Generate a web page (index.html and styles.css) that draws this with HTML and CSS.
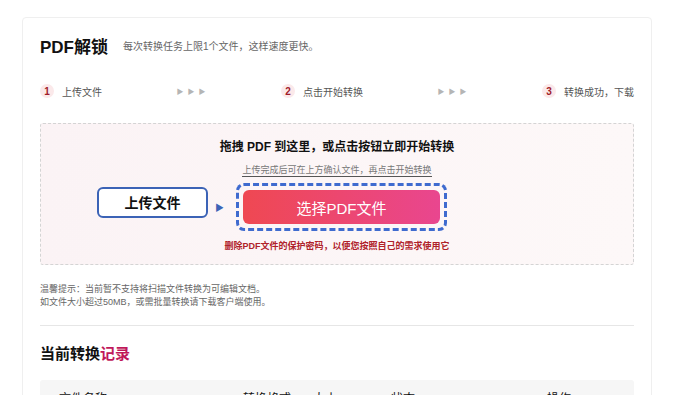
FILE: index.html
```html
<!DOCTYPE html>
<html lang="zh-CN">
  <head>
    <meta charset="UTF-8">
    <title>PDF解锁</title>
    <link rel="stylesheet" href="styles.css">
  </head>
  <body>
    <div class="page">
      <div class="card">
        <!-- 标题 -->
        <div class="header">
          <span class="title">PDF解锁</span>
          <span class="subtitle">每次转换任务上限1个文件，这样速度更快。</span>
        </div>

        <!-- 步骤 -->
        <div class="steps">
          <div class="step"><span class="step-num">1</span>上传文件</div>
          <div class="step-arrows">▶ ▶ ▶</div>
          <div class="step"><span class="step-num">2</span>点击开始转换</div>
          <div class="step-arrows">▶ ▶ ▶</div>
          <div class="step"><span class="step-num">3</span>转换成功，下载</div>
        </div>

        <!-- 上传区域 -->
        <div class="dropzone">
          <div class="drop-title">拖拽 PDF 到这里，或点击按钮立即开始转换</div>
          <div class="drop-hint">上传完成后可在上方确认文件，再点击开始转换</div>
          <div class="drop-row">
            <div class="drop-left">
              <div class="upload-label">上传文件</div>
              <span class="upload-arrow">▶</span>
            </div>
            <div class="dash-box">
              <button class="select-button">选择PDF文件</button>
            </div>
            <div></div>
          </div>
          <div class="drop-note">删除PDF文件的保护密码，以便您按照自己的需求使用它</div>
        </div>

        <div class="tips">
          温馨提示：当前暂不支持将扫描文件转换为可编辑文档。<br>
          如文件大小超过50MB，或需批量转换请下载客户端使用。
        </div>

        <div class="divider"></div>

        <div class="record-title">当前转换<span class="accent">记录</span></div>

        <div class="table-head">
          <span class="col col-name">文件名称</span>
          <span class="col col-format">转换格式</span>
          <span class="col col-size">大小</span>
          <span class="col col-status">状态</span>
          <span class="col col-op">操作</span>
        </div>
        <div class="table-body"></div>
      </div>
    </div>
  </body>
</html>
```

FILE: styles.css
```css
body {
  margin: 0;
  background: #fff;
  font-family: "Liberation Sans", "Noto Sans CJK SC", sans-serif;
  color: #222;
}

.page {
  padding: 17px 0 0 22px;
}

.card {
  width: 594px;
  padding: 15px 17px 40px;
  border: 1px solid #efefef;
  border-radius: 4px;
  background: #fff;
}

/* 标题 */
.header {
  display: flex;
  align-items: center;
  height: 24px;
}

.title {
  font-size: 17px;
  font-weight: bold;
  color: #111;
  margin-right: 15px;
}

.subtitle {
  font-size: 10px;
  color: #666;
}

/* 步骤 */
.steps {
  display: flex;
  justify-content: space-between;
  align-items: center;
  height: 20px;
  margin-top: 24px;
}

.step {
  display: flex;
  align-items: center;
  font-size: 10px;
  color: #555;
}

.step-num {
  width: 14px;
  height: 14px;
  border-radius: 50%;
  background: #fbe9ea;
  color: #a01c2a;
  font-size: 10px;
  font-weight: bold;
  display: flex;
  align-items: center;
  justify-content: center;
  margin-right: 8px;
}

.step-arrows {
  font-size: 7px;
  color: #b5b5b5;
  letter-spacing: 1px;
}

/* 上传区域 */
.dropzone {
  margin-top: 22px;
  height: 140px;
  border: 1px dashed #d4d4d4;
  border-radius: 3px;
  background: linear-gradient(90deg, #fbf3f5, #fdf8f8);
  display: flex;
  flex-direction: column;
  align-items: center;
}

.drop-title {
  margin-top: 15px;
  font-size: 12px;
  font-weight: bold;
  color: #111;
  line-height: 16px;
}

.drop-hint {
  margin-top: 10px;
  font-size: 9px;
  color: #777;
  line-height: 11px;
  border-bottom: 1px solid #555;
}

.drop-row {
  width: 100%;
  display: grid;
  grid-template-columns: 1fr auto 1fr;
  align-items: center;
  margin-top: 6px;
  padding-left: 9px;
  box-sizing: border-box;
}

.drop-left {
  display: flex;
  align-items: center;
  justify-content: flex-end;
  padding-right: 12px;
}

.upload-label {
  width: 107px;
  height: 27px;
  border: 2px solid #3c63b6;
  border-radius: 6px;
  background: #fff;
  display: flex;
  align-items: center;
  justify-content: center;
  font-size: 14px;
  font-weight: bold;
  color: #111;
  margin-top: -10px;
}

.upload-arrow {
  color: #3c63b6;
  font-size: 9px;
  margin-left: 7px;
}

.dash-box {
  border: 3px dashed #3f6bcf;
  border-radius: 8px;
  padding: 4px;
}

.select-button {
  display: block;
  width: 197px;
  height: 34px;
  border: none;
  border-radius: 6px;
  background: linear-gradient(90deg, #ef4852, #e9468f);
  color: #fff;
  font-family: inherit;
  font-size: 15px;
  cursor: pointer;
}

.drop-note {
  margin-top: 8px;
  font-size: 9px;
  font-weight: bold;
  color: #b0222a;
}

.tips {
  margin-top: 18px;
  font-size: 9px;
  line-height: 13px;
  color: #666;
}

.divider {
  margin-top: 16px;
  height: 1px;
  background: #e6e6e6;
}

.record-title {
  margin-top: 18px;
  font-size: 15px;
  font-weight: bold;
  color: #111;
  line-height: 20px;
}

.accent {
  color: #c0185a;
}

/* 表格 */
.table-head {
  margin-top: 16px;
  height: 34px;
  background: #f6f6f6;
  border-radius: 3px;
  display: flex;
  align-items: center;
  font-size: 12px;
  color: #111;
}

.col {
  display: block;
}

.col-name { width: 184px; padding-left: 19px; }
.col-format { width: 70px; }
.col-size { width: 78px; }
.col-status { width: 156px; }
.col-op { width: 50px; }

.table-body {
  height: 60px;
}
```
